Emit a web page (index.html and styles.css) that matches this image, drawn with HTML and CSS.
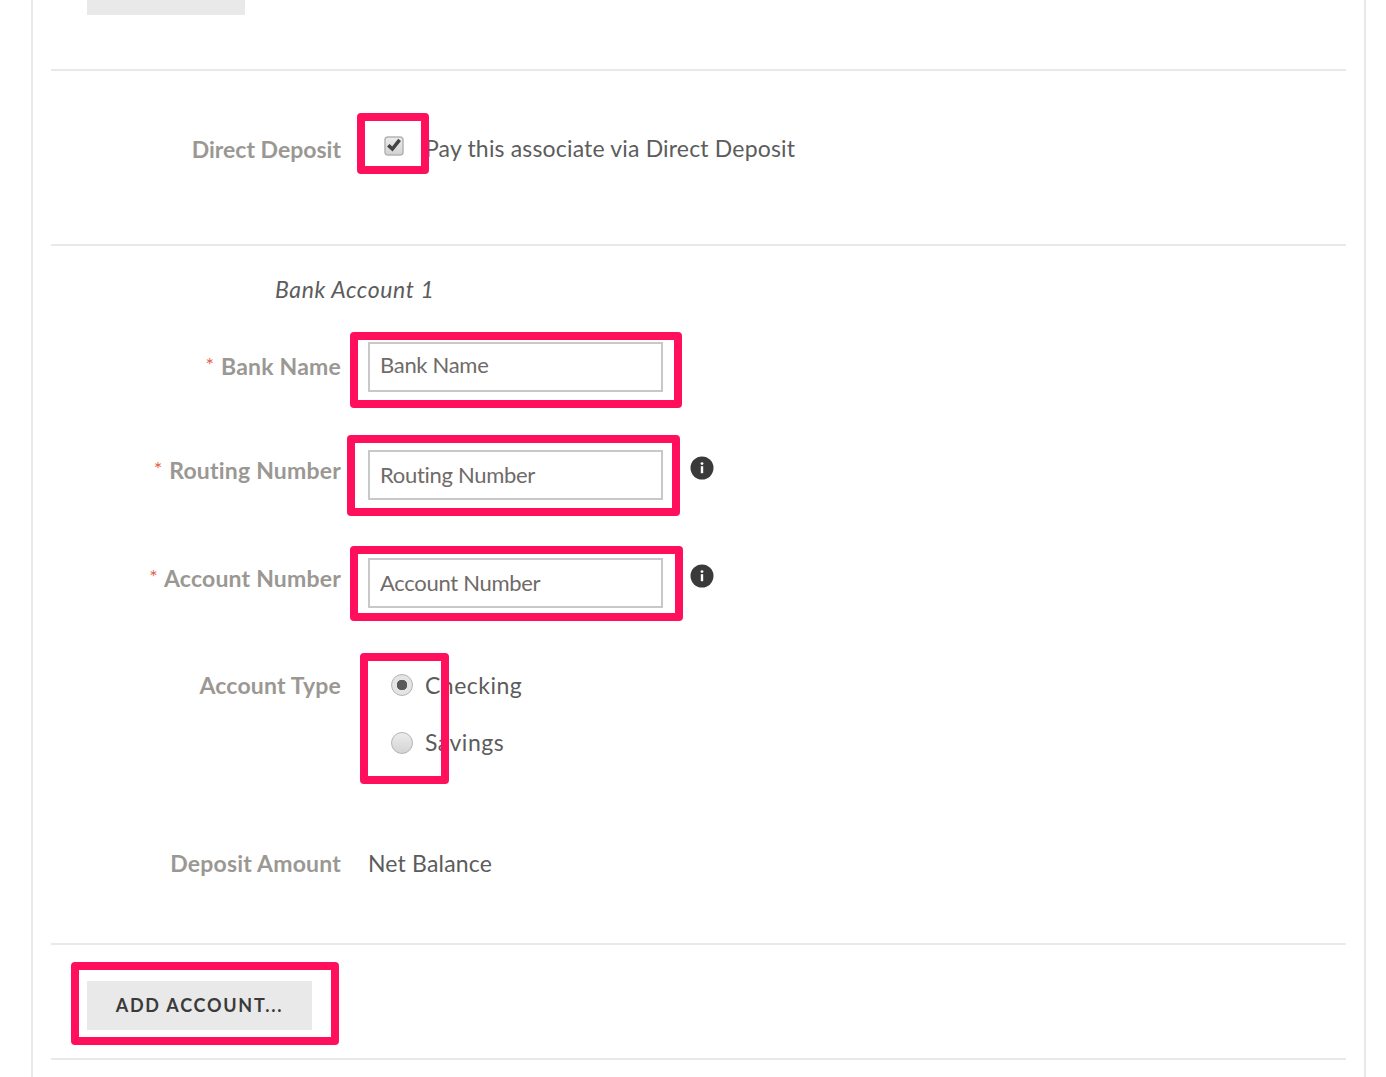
FILE: index.html
```html
<!DOCTYPE html>
<html lang="en">
<head>
<meta charset="utf-8">
<title>Direct Deposit</title>
<link rel="stylesheet" href="styles.css">
</head>
<body>
<main class="card">
  <section class="sec sec-top"><div class="stub"></div></section>
  <section class="sec sec-deposit">
    <div class="row row-deposit">
      <div class="label">Direct Deposit</div>
      <div class="value check-wrap">
        <svg class="check" width="20" height="20" viewBox="0 0 20 20" aria-hidden="true"><defs><linearGradient id="cg" x1="0" y1="0" x2="0" y2="1"><stop offset="0" stop-color="#ececec"/><stop offset="1" stop-color="#d2d2d2"/></linearGradient></defs><rect x="1" y="1" width="18" height="18" rx="3" fill="url(#cg)" stroke="#b4b4b4" stroke-width="1.5"/><path d="M3 10.5l2.6-2.6 2.6 2.6L14.2 2.8l2.8 2.2-8.4 10.6z" fill="#444"/></svg>
        <span class="text check-text">Pay this associate via Direct Deposit</span>
      </div>
    </div>
  </section>
  <section class="sec sec-bank">
    <div class="heading">Bank Account 1</div>
    <div class="row row-bank">
      <div class="label"><span class="req">*</span> Bank Name</div>
      <input class="field field-bank" type="text" placeholder="Bank Name">
    </div>
    <div class="row row-routing">
      <div class="label label-up"><span class="req">*</span> Routing Number</div>
      <input class="field" type="text" placeholder="Routing Number">
      <svg class="info" width="24" height="24" viewBox="0 0 24 24" aria-hidden="true"><circle cx="12" cy="12" r="11.5" fill="#3a3a3a"/><circle cx="12" cy="7.6" r="1.4" fill="#fff"/><rect x="10.8" y="10.2" width="2.4" height="7" fill="#fff"/></svg>
    </div>
    <div class="row row-account">
      <div class="label label-up"><span class="req">*</span> Account Number</div>
      <input class="field" type="text" placeholder="Account Number">
      <svg class="info" width="24" height="24" viewBox="0 0 24 24" aria-hidden="true"><circle cx="12" cy="12" r="11.5" fill="#3a3a3a"/><circle cx="12" cy="7.6" r="1.4" fill="#fff"/><rect x="10.8" y="10.2" width="2.4" height="7" fill="#fff"/></svg>
    </div>
    <div class="row row-type">
      <div class="label">Account Type</div>
      <div class="radios">
        <div class="radio-row">
          <span class="radio radio-on"></span><span class="text radio-text">Checking</span>
        </div>
        <div class="radio-row">
          <span class="radio radio-low"></span><span class="text radio-text">Savings</span>
        </div>
      </div>
    </div>
    <div class="row row-amount">
      <div class="label">Deposit Amount</div>
      <div class="text">Net Balance</div>
    </div>
  </section>
  <section class="sec sec-add"><button class="add" type="button">ADD ACCOUNT...</button></section>
</main>
<div class="mark mark-check"></div>
<div class="mark mark-bank"></div>
<div class="mark mark-routing"></div>
<div class="mark mark-account"></div>
<div class="mark mark-type"></div>
<div class="mark mark-add"></div>
</body>
</html>
```
FILE: styles.css
```css
* { box-sizing: border-box; }
html, body { margin: 0; height: 1077px; overflow: hidden; background: #fff; }
body { position: relative; font-family: Lato, "Open Sans", sans-serif; font-size: 23px; color: #5c5c5c; }

.card {
  margin-left: 31px;
  width: 1335px;
  height: 1077px;
  padding: 0 18px;
  border-left: 2px solid #e9e9e9;
  border-right: 2px solid #e9e9e9;
}
.sec { border-bottom: 2px solid #e9e9e9; }
.sec-top { height: 71px; padding-left: 36px; }
.stub { width: 158px; height: 15px; background: #e9e9e9; }
.sec-deposit { height: 175px; padding-top: 64px; }
.sec-bank { height: 699px; padding-top: 29px; }
.sec-add { height: 115px; padding: 36px 0 0 36px; }

.row { display: flex; align-items: center; }
.label {
  width: 290px;
  margin-right: 27px;
  margin-top: -2px;
  flex: none;
  text-align: right;
  font-weight: 700;
  color: #9b9894;
  font-size: 23px;
  letter-spacing: 0.2px;
  line-height: 28px;
}
.row-deposit .label { margin-top: 0; letter-spacing: 0; }
.label-up { transform: translateY(-4px); }
.req { display: inline-block; margin-right: 1px; color: #e8604c; font-weight: 400; font-size: 20px; line-height: 20px; vertical-align: 3px; }
.text { margin-top: -2px; font-size: 23px; letter-spacing: 0.17px; line-height: 26px; height: 26px; color: #5c5c5c; white-space: nowrap; }
.radio-text { letter-spacing: 0.5px; }

.row-deposit { height: 28px; }
.check-wrap { display: flex; align-items: center; }
.check { margin: -6px 0 0 16px; }
.check-text { margin-left: 21px; }

.heading { margin-left: 224px; font-style: italic; font-size: 23px; letter-spacing: 0.6px; line-height: 28px; color: #5c5c5c; }
.row-bank { margin-top: 39px; height: 50px; }
.row-routing { margin-top: 58px; height: 50px; }
.row-account { margin-top: 58px; height: 50px; }
.field {
  width: 295px;
  height: 50px;
  flex: none;
  padding: 0 10px 2px;
  border: 2px solid #c8c8c8;
  border-radius: 0;
  background: #fff;
  font-family: inherit;
  font-size: 22px;
  letter-spacing: -0.3px;
  color: #5c5c5c;
  outline: none;
}
.field-bank { padding-bottom: 5px; }
.field::placeholder { color: #6f6b68; opacity: 1; }
.info { margin: -14px 0 0 27px; flex: none; }

.row-type { margin-top: 64px; align-items: flex-start; height: 120px; }
.row-type .label { margin-top: -1px; }
.radios { display: flex; flex-direction: column; gap: 29px; margin-left: 23px; }
.radio-row { display: flex; align-items: center; gap: 11px; height: 28px; }
.radio {
  width: 22px;
  height: 22px;
  flex: none;
  margin: -3px 1px 0 0;
  border-radius: 50%;
  border: 1.5px solid #b4b4b4;
  background: linear-gradient(#ececec, #d4d4d4);
}
.radio-low { margin-top: -1px; }
.radio-on { background: radial-gradient(circle, #5a5a5a 0 5px, #e4e4e4 5.5px); }
.row-amount { margin-top: 59px; }

.add {
  width: 225px;
  height: 49px;
  padding: 0 0 2px;
  border: 0;
  background: #e9e9e9;
  font-family: inherit;
  font-size: 18px;
  font-weight: 700;
  letter-spacing: 1.75px;
  color: #3a3a3a;
}

.mark { position: absolute; border: 8px solid #ff0f5c; border-radius: 4px; }
.mark-check { left: 357px; top: 113px; width: 72px; height: 61px; }
.mark-bank { left: 350px; top: 332px; width: 332px; height: 76px; }
.mark-routing { left: 347px; top: 435px; width: 333px; height: 81px; }
.mark-account { left: 350px; top: 546px; width: 333px; height: 75px; }
.mark-type { left: 360px; top: 653px; width: 89px; height: 131px; }
.mark-add { left: 71px; top: 962px; width: 268px; height: 83px; }
```
